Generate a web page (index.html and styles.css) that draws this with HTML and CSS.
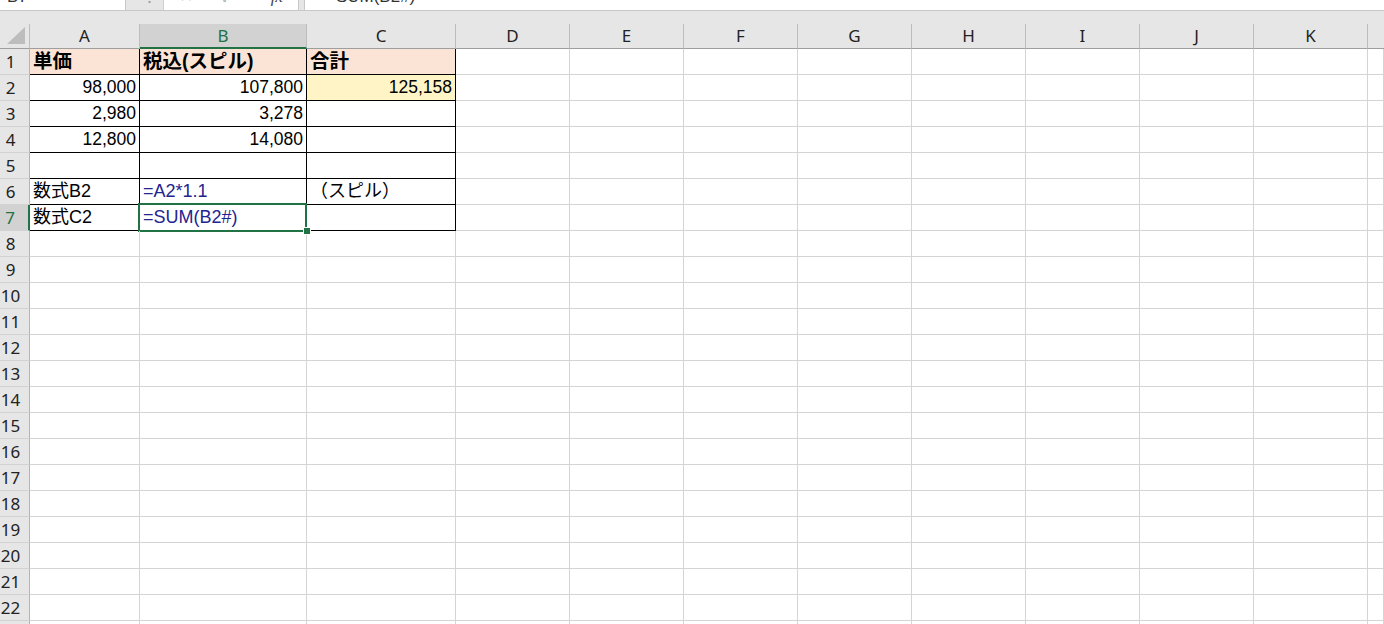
FILE: index.html
```html
<!DOCTYPE html>
<html lang="ja">
<head>
<meta charset="utf-8">
<title>Book1 - Excel</title>
<link rel="stylesheet" href="styles.css">
</head>
<body>
<div class="app">
  <!-- formula bar, scrolled so only its lower edge shows -->
  <div class="fbar">
    <div class="namebox"><span class="clip">B7</span></div>
    <div class="grip"><span class="clip">⋮</span></div>
    <div class="fxbox">
      <span class="clip icons"><span class="x">✕</span><span class="ok">✓</span><span class="fx">fx</span></span>
    </div>
    <div class="formula"><span class="clip">=SUM(B2#)</span></div>
  </div>
  <div class="strip"></div>

  <div class="sheet">
    <!-- column headers -->
    <div class="corner"><svg width="20" height="18" viewBox="0 0 20 18"><polygon points="19,0 19,17 1,17" fill="#bdbdbd"/></svg></div>
    <div class="ch">A</div>
    <div class="ch sel">B</div>
    <div class="ch">C</div>
    <div class="ch">D</div>
    <div class="ch">E</div>
    <div class="ch">F</div>
    <div class="ch">G</div>
    <div class="ch">H</div>
    <div class="ch">I</div>
    <div class="ch">J</div>
    <div class="ch">K</div>
    <div class="ch last"></div>

    <!-- row 1 -->
    <div class="rh">1</div>
    <div class="t head">単価</div>
    <div class="t head">税込(スピル)</div>
    <div class="t head">合計</div>
    <div></div><div></div><div></div><div></div><div></div><div></div><div></div><div></div><div></div>

    <!-- row 2 -->
    <div class="rh">2</div>
    <div class="t num">98,000</div>
    <div class="t num">107,800</div>
    <div class="t num total">125,158</div>
    <div></div><div></div><div></div><div></div><div></div><div></div><div></div><div></div><div></div>

    <!-- row 3 -->
    <div class="rh">3</div>
    <div class="t num">2,980</div>
    <div class="t num">3,278</div>
    <div class="t"></div>
    <div></div><div></div><div></div><div></div><div></div><div></div><div></div><div></div><div></div>

    <!-- row 4 -->
    <div class="rh">4</div>
    <div class="t num">12,800</div>
    <div class="t num">14,080</div>
    <div class="t"></div>
    <div></div><div></div><div></div><div></div><div></div><div></div><div></div><div></div><div></div>

    <!-- row 5 -->
    <div class="rh">5</div>
    <div class="t"></div>
    <div class="t"></div>
    <div class="t"></div>
    <div></div><div></div><div></div><div></div><div></div><div></div><div></div><div></div><div></div>

    <!-- row 6 -->
    <div class="rh">6</div>
    <div class="t txt">数式B2</div>
    <div class="t txt fml">=A2*1.1</div>
    <div class="t txt">（スピル）</div>
    <div></div><div></div><div></div><div></div><div></div><div></div><div></div><div></div><div></div>

    <!-- row 7 (active row) -->
    <div class="rh sel">7</div>
    <div class="t txt">数式C2</div>
    <div class="t txt fml active">=SUM(B2#)</div>
    <div class="t"></div>
    <div></div><div></div><div></div><div></div><div></div><div></div><div></div><div></div><div></div>

    <div class="rh">8</div><div></div><div></div><div></div><div></div><div></div><div></div><div></div><div></div><div></div><div></div><div></div><div></div>
    <div class="rh">9</div><div></div><div></div><div></div><div></div><div></div><div></div><div></div><div></div><div></div><div></div><div></div><div></div>
    <div class="rh">10</div><div></div><div></div><div></div><div></div><div></div><div></div><div></div><div></div><div></div><div></div><div></div><div></div>
    <div class="rh">11</div><div></div><div></div><div></div><div></div><div></div><div></div><div></div><div></div><div></div><div></div><div></div><div></div>
    <div class="rh">12</div><div></div><div></div><div></div><div></div><div></div><div></div><div></div><div></div><div></div><div></div><div></div><div></div>
    <div class="rh">13</div><div></div><div></div><div></div><div></div><div></div><div></div><div></div><div></div><div></div><div></div><div></div><div></div>
    <div class="rh">14</div><div></div><div></div><div></div><div></div><div></div><div></div><div></div><div></div><div></div><div></div><div></div><div></div>
    <div class="rh">15</div><div></div><div></div><div></div><div></div><div></div><div></div><div></div><div></div><div></div><div></div><div></div><div></div>
    <div class="rh">16</div><div></div><div></div><div></div><div></div><div></div><div></div><div></div><div></div><div></div><div></div><div></div><div></div>
    <div class="rh">17</div><div></div><div></div><div></div><div></div><div></div><div></div><div></div><div></div><div></div><div></div><div></div><div></div>
    <div class="rh">18</div><div></div><div></div><div></div><div></div><div></div><div></div><div></div><div></div><div></div><div></div><div></div><div></div>
    <div class="rh">19</div><div></div><div></div><div></div><div></div><div></div><div></div><div></div><div></div><div></div><div></div><div></div><div></div>
    <div class="rh">20</div><div></div><div></div><div></div><div></div><div></div><div></div><div></div><div></div><div></div><div></div><div></div><div></div>
    <div class="rh">21</div><div></div><div></div><div></div><div></div><div></div><div></div><div></div><div></div><div></div><div></div><div></div><div></div>
    <div class="rh">22</div><div></div><div></div><div></div><div></div><div></div><div></div><div></div><div></div><div></div><div></div><div></div><div></div>
    <div class="rh">23</div><div></div><div></div><div></div><div></div><div></div><div></div><div></div><div></div><div></div><div></div><div></div><div></div>
  </div>
</div>
</body>
</html>
```

FILE: styles.css
```css
html, body {
  margin: 0;
  height: 100%;
  overflow: hidden;
  background: #fff;
}

body {
  font-family: "Liberation Sans", "Noto Sans CJK JP", sans-serif;
  color: #000;
}

/* ---------- formula bar ---------- */
.fbar {
  display: flex;
  height: 11px;
  background: #e6e6e6;
  border-bottom: 1px solid #c8c8c8;
  box-sizing: border-box;
  overflow: hidden;
}

.clip {
  display: block;
  font-size: 17px;
  line-height: 20px;
  margin-top: -13px;
  white-space: nowrap;
}

.namebox {
  width: 126px;
  padding-left: 7px;
  box-sizing: border-box;
  background: #fff;
  border-right: 1px solid #c8c8c8;
  color: #333;
}

.grip {
  width: 37px;
  padding-left: 15px;
  box-sizing: border-box;
  color: #9a9a9a;
}

.fxbox {
  width: 136px;
  box-sizing: border-box;
  background: #fff;
  border-left: 1px solid #d0d0d0;
  border-right: 1px solid #c8c8c8;
}

.icons {
  display: flex;
  color: #b0b0b0;
}

.icons .x { margin-left: 15px; }
.icons .ok { margin-left: 28px; }
.icons .fx {
  margin-left: 38px;
  font-style: italic;
  font-family: "Liberation Serif", serif;
  color: #444;
}

.formula {
  flex: 1;
  margin-left: 5px;
  padding-left: 21px;
  background: #fff;
  border-left: 1px solid #c8c8c8;
  color: #333;
}

.strip {
  height: 13px;
  background: #e6e6e6;
}

/* ---------- grid ---------- */
.sheet {
  display: grid;
  grid-template-columns: 30px 110px 167px 149px repeat(8, 114px) 1fr;
  grid-template-rows: 25px;
  grid-auto-rows: 26px;
}

.sheet > div {
  position: relative;
  box-sizing: border-box;
  border-right: 1px solid #d4d4d4;
  border-bottom: 1px solid #d4d4d4;
  overflow: visible;
  white-space: nowrap;
}

/* headers */
.sheet > .corner {
  background: #e6e6e6;
  border-right: 1px solid #bdbdbd;
  border-bottom: 1px solid #9e9e9e;
  display: flex;
  align-items: flex-end;
  justify-content: flex-end;
  padding: 0 3px 3px 0;
}

.sheet > .ch {
  background: #e6e6e6;
  border-right: 1px solid #bdbdbd;
  border-bottom: 1px solid #9e9e9e;
  font-family: "Noto Sans", "Liberation Sans", sans-serif;
  font-size: 17px;
  line-height: 24px;
  text-align: center;
  color: #222;
}

.sheet > .ch.last { border-right: none; }

.sheet > .ch.sel {
  background: #d2d2d2;
  color: #217346;
  border-bottom: 2px solid #217346;
  line-height: 23px;
}

.sheet > .rh {
  background: #e6e6e6;
  border-right: 1px solid #b4b4b4;
  border-bottom: 1px solid #d2d2d2;
  font-family: "Noto Sans", "Liberation Sans", sans-serif;
  font-size: 17px;
  line-height: 25px;
  text-align: center;
  padding-right: 8px;
  color: #222;
}

.sheet > .rh.sel {
  background: #d2d2d2;
  color: #217346;
  border-right: 2px solid #217346;
}

/* the bordered table A1:C7 */
.sheet > .t {
  border-right-color: #000;
  border-bottom-color: #000;
  line-height: 25px;
}

.sheet > .head {
  background: #fbe4d6;
  font-weight: bold;
  font-size: 19.5px;
  padding-left: 3px;
}

.sheet > .num {
  font-size: 17.5px;
  text-align: right;
  padding-right: 3px;
}

.sheet > .total {
  background: #fff4c6;
}

.sheet > .txt {
  font-size: 18px;
  padding-left: 3px;
}

.sheet > .fml {
  font-size: 18px;
  color: #24248f;
}

/* selection frame and fill handle on the active cell */
.sheet > .active::after {
  content: "";
  position: absolute;
  left: -2px;
  top: -2px;
  right: -1px;
  bottom: -2px;
  border: 2px solid #217346;
  pointer-events: none;
}

.sheet > .active::before {
  content: "";
  position: absolute;
  right: -4px;
  bottom: -4px;
  width: 6px;
  height: 6px;
  background: #217346;
  box-shadow: 0 0 0 1px #fff;
  z-index: 1;
}
```
